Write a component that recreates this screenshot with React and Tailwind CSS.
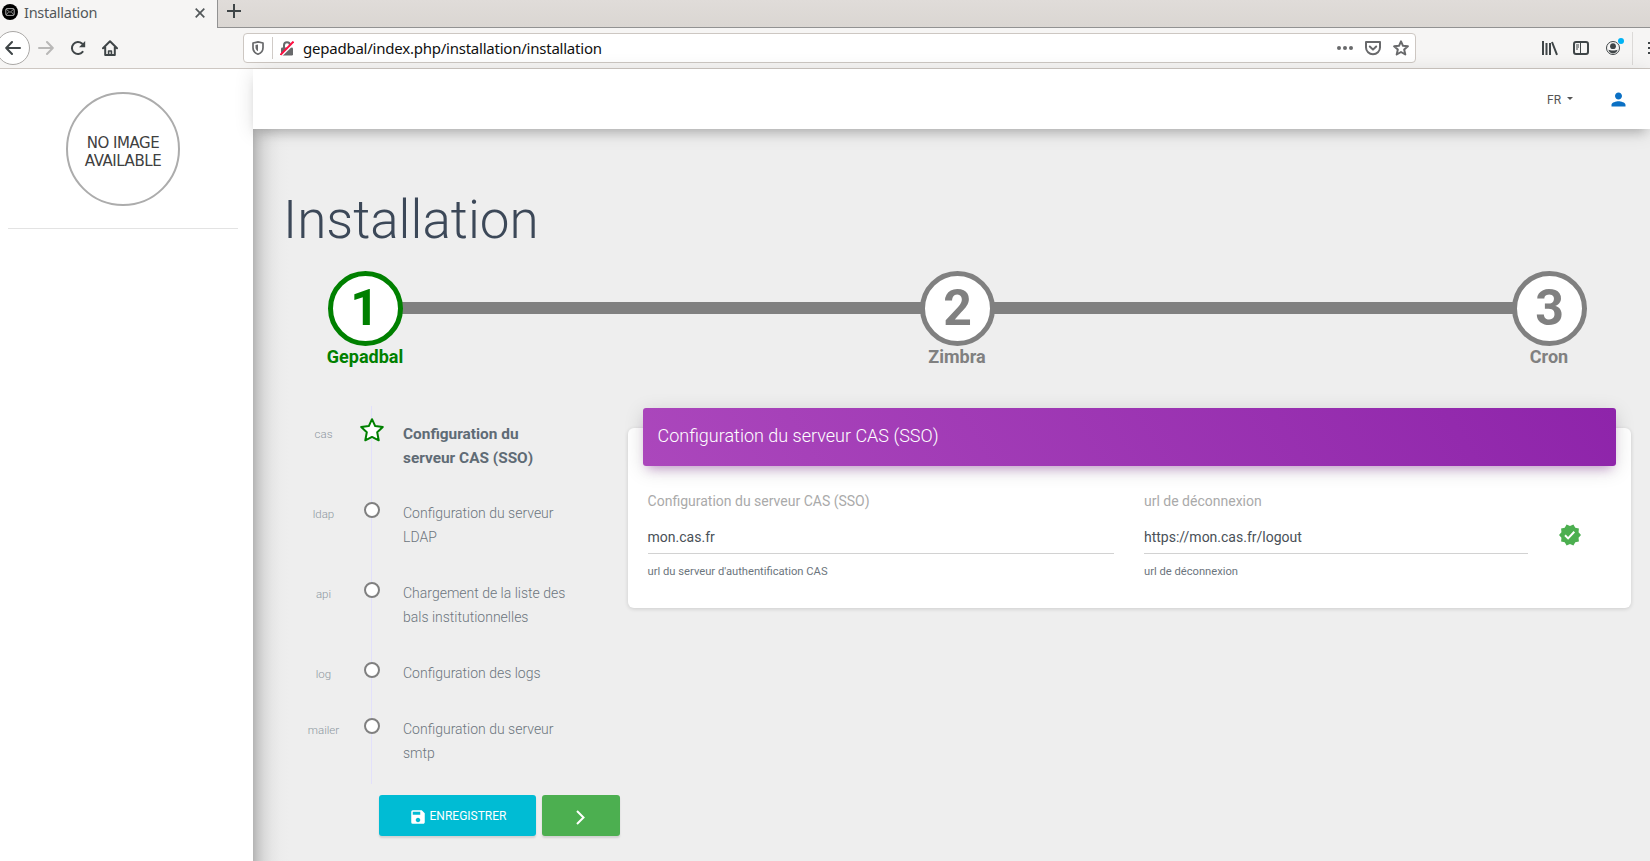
import React from "react";
import { MdPerson, MdSave } from "react-icons/md";

function BrowserChrome() {
  return (
    <header className="h-[69px] shrink-0 overflow-hidden font-['Noto_Sans',sans-serif]">
      <div className="flex h-7 bg-linear-to-b from-[#e0dcd9] to-[#dad6d2]">
        <div className="flex h-7 w-[217px] shrink-0 items-center bg-[#f6f5f4] pb-1 pl-[2px]">
          <svg width="16" height="16" viewBox="0 0 16 16">
            <circle cx="8" cy="8" r="8" fill="#000" />
            <rect x="3.8" y="4.6" width="8.4" height="6.8" rx="1" fill="none" stroke="#aaa" />
            <path d="M4 5l4 3.4L12 5M4 11l2.6-3M12 11L9.4 8" fill="none" stroke="#aaa" strokeWidth=".8" />
          </svg>
          <span className="ml-[6px] w-[171px] text-[14.5px] leading-5 tracking-[-0.27px] text-[#53585a]">Installation</span>
          <svg width="10" height="10" viewBox="0 0 10 10" className="mt-px">
            <path d="M.7.7l8.6 8.6M9.3.7L.7 9.3" stroke="#53585a" strokeWidth="1.7" />
          </svg>
        </div>
        <div className="h-7 flex-1 border-b border-l border-[#929292] pt-1 pl-[9px]">
          <svg width="14" height="14" viewBox="0 0 14 14">
            <path d="M7 0v14M0 7h14" stroke="#3f4547" strokeWidth="2" />
          </svg>
        </div>
      </div>
      <div className="flex h-[41px] items-center border-b border-[#cdc7c2] bg-[#f6f5f4]">
        <div className="-ml-1 flex h-[34px] w-[34px] shrink-0 items-center justify-center rounded-full border border-[#aaa8a6] bg-white">
          <svg width="16" height="16" viewBox="0 0 16 16" fill="none" stroke="#3f4547" strokeWidth="2" strokeLinecap="round" strokeLinejoin="round">
            <path d="M15 8H1.500M7 2L1.200 8L7 14" />
          </svg>
        </div>
        <svg className="ml-2 shrink-0" width="16" height="16" viewBox="0 0 16 16" fill="none" stroke="#b9b8b7" strokeWidth="2" strokeLinecap="round" strokeLinejoin="round">
          <path d="M1 8h13.500M9 2l5.800 6L9 14" />
        </svg>
        <svg className="ml-4 shrink-0" width="16" height="16" viewBox="0 0 16 16" fill="none" stroke="#3f4547" strokeWidth="2">
          <path d="M12.600 11.800A6 6 0 1 1 12 3.600" strokeLinecap="round" />
          <path d="M15.200 1v6.200H9z" fill="#3f4547" stroke="none" />
        </svg>
        <svg className="ml-4 shrink-0" width="16" height="16" viewBox="0 0 16 16" fill="none" stroke="#3f4547" strokeWidth="2" strokeLinejoin="round" strokeLinecap="round">
          <path d="M1 8.200L8 1.200l7 7M3.200 7v8h9.600V7" />
          <path d="M6.600 15v-4h2.800v4" strokeWidth="1.600" />
        </svg>
        <div className="ml-[125px] flex h-[30px] w-[1173px] shrink-0 items-center rounded-[4px] border border-[#cdc7c2] bg-white">
          <svg className="ml-2 shrink-0" width="12" height="14" viewBox="0 0 12 14" fill="none" stroke="#68696b" strokeWidth="1.700">
            <path d="M6 .9L11 2v4.800C11 10 9 12.200 6 13.200 3 12.200 1 10 1 6.800V2z" strokeLinejoin="round" />
            <path d="M6 3.600v6.600C4.300 9.300 3.500 8 3.500 6.300V4z" fill="#68696b" stroke="none" />
          </svg>
          <div className="ml-2 h-[22px] w-px bg-[#d0cbc7]" />
          <svg className="ml-[7px] shrink-0" width="14" height="15" viewBox="0 0 14 15" fill="none">
            <path d="M4 7V4.300a3 3 0 0 1 6 0V7" stroke="#68696b" strokeWidth="2" />
            <rect x="1" y="6.500" width="12" height="8" rx="1.200" fill="#68696b" />
            <path d="M1 15L14.500 1.800" stroke="#fff" strokeWidth="2" />
            <path d="M.5 13.800L13.500 .6" stroke="#ff0f42" strokeWidth="2" />
          </svg>
          <span className="ml-[9px] flex-1 text-[15px] leading-5 tracking-[-0.23px] text-[#101010]">gepadbal/index.php/installation/installation</span>
          <svg width="16" height="16" viewBox="0 0 16 16" fill="#68696b">
            <circle cx="2" cy="8" r="2" /><circle cx="8" cy="8" r="2" /><circle cx="14" cy="8" r="2" />
          </svg>
          <svg className="ml-3" width="16" height="16" viewBox="0 0 16 16" fill="none" stroke="#68696b" strokeWidth="2" strokeLinejoin="round" strokeLinecap="round">
            <path d="M1 2h14v5.500a7 6.700 0 0 1-14 0z" />
            <path d="M4.800 6.500L8 9.600l3.200-3.100" />
          </svg>
          <svg className="mr-[6px] ml-3" width="16" height="16" viewBox="0 0 16 16" fill="none" stroke="#68696b" strokeWidth="2" strokeLinejoin="round">
            <path d="M8 1.300l2 4.500 4.900.5-3.700 3.300 1.100 4.900L8 12l-4.300 2.500 1.100-4.900L1.100 6.300 6 5.800z" />
          </svg>
        </div>
        <svg className="ml-[126px] shrink-0" width="16" height="16" viewBox="0 0 16 16" fill="none" stroke="#3f4547" strokeWidth="2">
          <path d="M1 1v14M4.500 3v12M8 3v12M10 2l5 12.800" />
        </svg>
        <svg className="ml-[15px] shrink-0" width="16" height="16" viewBox="0 0 16 16" fill="none" stroke="#3f4547">
          <rect x="1" y="2" width="14" height="12" rx="2" strokeWidth="2" />
          <path d="M7.500 2v12M3 5h3M3 7h3M3 9h2" />
        </svg>
        <svg className="ml-4 shrink-0 overflow-visible" width="18" height="16" viewBox="0 0 18 16">
          <circle cx="8" cy="8" r="6.500" fill="none" stroke="#3f4547" />
          <circle cx="8" cy="6.200" r="2.900" fill="#3f4547" />
          <path d="M3.400 9.800c1.800 1 7.400 1 9.200 0-.6 2.200-2.400 3.600-4.600 3.600s-4-1.400-4.600-3.600z" fill="#3f4547" />
          <circle cx="16" cy="1" r="3" fill="#00b3f4" />
        </svg>
        <div className="ml-[9px] h-[33px] w-px shrink-0 bg-[#dcdad8]" />
        <svg className="ml-[14px] shrink-0" width="16" height="16" viewBox="0 0 16 16" stroke="#3f4547" strokeWidth="2">
          <path d="M1 3h16M1 8h16M1 13h16" />
        </svg>
      </div>
    </header>
  );
}

function Sidebar() {
  return (
    <aside className="w-[253px] shrink-0 bg-white pt-[23px]">
      <div className="ml-[66px] flex h-[114px] w-[114px] flex-col items-center justify-center rounded-full border-2 border-[#acacac] pt-[6px] font-['DejaVu_Sans',sans-serif] text-[15px] leading-[18px] tracking-[-0.45px] text-[#404040]">
        <span>NO IMAGE</span>
        <span>AVAILABLE</span>
      </div>
      <div className="mt-[22px] ml-2 h-px w-[230px] bg-[#e3e3e3]" />
    </aside>
  );
}

function Step({ n, label, active }) {
  return (
    <div className={active ? "relative flex w-[75px] flex-col items-center text-[#008000]" : "relative flex w-[75px] flex-col items-center text-[#808080]"}>
      <div className={active ? "flex h-[75px] w-[75px] items-center justify-center rounded-full border-[5px] border-current bg-white pr-[2px] text-[50px] leading-[65px] font-bold" : "flex h-[75px] w-[75px] items-center justify-center rounded-full border-[5px] border-current bg-white text-[50px] leading-[65px] font-bold"}>
        {n}
      </div>
      <div className="pr-px text-[18px] leading-[22px] font-bold">{label}</div>
    </div>
  );
}

function Stepper() {
  return (
    <div className="ml-[43px] flex w-[1259px]">
      <Step n="1" label="Gepadbal" active />
      <div className="-mx-1 mt-[31px] h-3 flex-1 bg-[#808080]" />
      <Step n="2" label="Zimbra" />
      <div className="-mx-1 mt-[31px] h-3 flex-1 bg-[#808080]" />
      <Step n="3" label="Cron" />
    </div>
  );
}

const sections = [
  { key: "cas", lines: ["Configuration du", "serveur CAS (SSO)"], active: true },
  { key: "ldap", lines: ["Configuration du serveur", "LDAP"] },
  { key: "api", lines: ["Chargement de la liste des", "bals institutionnelles"] },
  { key: "log", lines: ["Configuration des logs"] },
  { key: "mailer", lines: ["Configuration du serveur", "smtp"] },
];

function Timeline() {
  return (
    <ul className="-mt-[2px] w-[345px]">
      {sections.map((s) => (
        <li key={s.key} className="flex">
          <div className={s.active ? "w-[78px] pt-4 pr-px text-center text-[11.5px] leading-6 font-light text-[#8d979f]" : "w-[78px] pt-[14px] pr-px text-center text-[11.5px] leading-6 font-light text-[#8d979f]"}>{s.key}</div>
          <div className="relative w-[18px] pl-2">
            <div className="h-full w-px bg-[#e2e0fb]" />
            {s.active ? (
              <svg className="absolute top-[12px] -left-[3px]" width="24" height="24" viewBox="0 0 24 24" fill="#fff" stroke="#008000" strokeWidth="2" strokeLinejoin="round">
                <path d="M12 1.200l3.200 6.900 7.600.9-5.600 5.200 1.500 8.100L12 18.900l-6.700 3.400 1.500-8.100L1.200 9l7.600-.9z" />
              </svg>
            ) : (
              <div className="absolute top-[14px] left-px h-4 w-4 rounded-full border-2 border-[#808080] bg-white" />
            )}
          </div>
          <div className={s.active ? "ml-[22px] pt-4 pb-[18px] text-[15.4px] leading-6 font-bold text-[#5f6b75]" : "ml-[22px] pt-[13px] pb-[19px] text-[14px] leading-6 font-light text-[#6c757d]"}>
            {s.lines.map((l) => (
              <div key={l} className="whitespace-nowrap">{l}</div>
            ))}
          </div>
        </li>
      ))}
    </ul>
  );
}

function Field({ label, value, help }) {
  return (
    <div>
      <div className="text-[14px] leading-5 text-[#aaaaaa]">{label}</div>
      <div className="mt-2 h-[35px] border-b border-[#d2d2d2] text-[14px] leading-[36px] text-[#495057]">{value}</div>
      <div className="mt-2 text-[11.2px] leading-5 text-[#6c757d]">{help}</div>
    </div>
  );
}

function ConfigCard() {
  return (
    <section className="mt-5 h-[180px] w-[1003px] rounded-md bg-white px-[15px] shadow-[0_1px_4px_0_rgba(0,0,0,0.14)]">
      <h2 className="relative -mt-5 h-[58px] rounded-[3px] bg-[linear-gradient(60deg,#ab47bc,#8e24aa)] pl-[14.5px] text-[18px] leading-[55px] font-light text-white shadow-[0_4px_20px_0_rgba(0,0,0,0.14),0_7px_10px_-5px_rgba(156,39,176,0.4)]">
        Configuration du serveur CAS (SSO)
      </h2>
      <div className="grid grid-cols-[466.400px_384px_24px] gap-x-[30px] pt-[25px] pl-[4.600px]">
        <Field label="Configuration du serveur CAS (SSO)" value="mon.cas.fr" help="url du serveur d'authentification CAS" />
        <Field label="url de déconnexion" value="https://mon.cas.fr/logout" help="url de déconnexion" />
        <svg className="mt-[32px] text-[#4caf50]" width="24" height="24" viewBox="0 0 24 24" fill="currentColor">
          <path d="M23 12l-2.440-2.780.34-3.680-3.610-.82-1.890-3.180L12 3 8.600 1.540 6.710 4.720l-3.610.81.34 3.680L1 12l2.440 2.780-.34 3.690 3.610.82 1.890 3.180L12 21l3.400 1.460 1.890-3.180 3.610-.82-.34-3.680z" />
          <path d="M7 12.300l3.100 3.100 6.200-6.600" fill="none" stroke="#fff" strokeWidth="2" />
        </svg>
      </div>
    </section>
  );
}

export default function App() {
  return (
    <div className="flex h-[861px] w-[1650px] flex-col overflow-hidden bg-white font-[Roboto,sans-serif]">
      <BrowserChrome />
      <div className="flex min-h-0 flex-1">
        <Sidebar />
        <div className="flex min-w-0 flex-1 flex-col bg-[#eeeeee]">
          <nav className="relative z-10 flex h-[60px] shrink-0 items-center bg-white pt-px text-[12px] text-[#555] shadow-[0_3px_20px_0_rgba(0,0,0,0.12),0_8px_10px_-5px_rgba(0,0,0,0.2)]">
            <span className="ml-[1294px]">FR</span>
            <span className="-mt-[3px] ml-[6px] h-0 w-0 border-x-[3px] border-t-[3px] border-x-transparent border-t-[#555]" />
            <MdPerson className="ml-[35px] h-[21px] w-[21px] text-[#0b70c4]" />
          </nav>
          <main className="flex-1 bg-[linear-gradient(to_right,#b4b4b4_0px,#c8c8c8_5px,#d9d9d9_11px,#e6e6e6_19px,#ececec_27px,#eeeeee_36px)] pl-8">
            <h1 className="-ml-[2px] pt-[55px] text-[53px] leading-[72px] font-light text-[#3c4858]">Installation</h1>
            <div className="pt-[15px]"><Stepper /></div>
            <div className="mt-[40px] flex">
              <div className="w-[343px] shrink-0">
                <Timeline />
                <div className="mt-[11px] ml-[94px] flex gap-[6px] text-[12px] text-white">
                  <button className="flex h-[41px] w-[157px] items-center justify-center gap-[3px] rounded-[3px] bg-[#00bcd4] shadow-[0_2px_2px_0_rgba(0,0,0,0.12)]">
                    <MdSave className="mt-[3px] h-[18px] w-[18px]" />
                    <span>ENREGISTRER</span>
                  </button>
                  <button className="flex h-[41px] w-[78px] items-center justify-center rounded-[3px] bg-[#4caf50] pr-px shadow-[0_2px_2px_0_rgba(0,0,0,0.12)]">
                    <svg className="mt-[3px]" width="9" height="15" viewBox="0 0 9 15" fill="none" stroke="#fff" strokeWidth="2">
                      <path d="M1 1l6.500 6.500L1 14" />
                    </svg>
                  </button>
                </div>
              </div>
              <ConfigCard />
            </div>
          </main>
        </div>
      </div>
    </div>
  );
}
